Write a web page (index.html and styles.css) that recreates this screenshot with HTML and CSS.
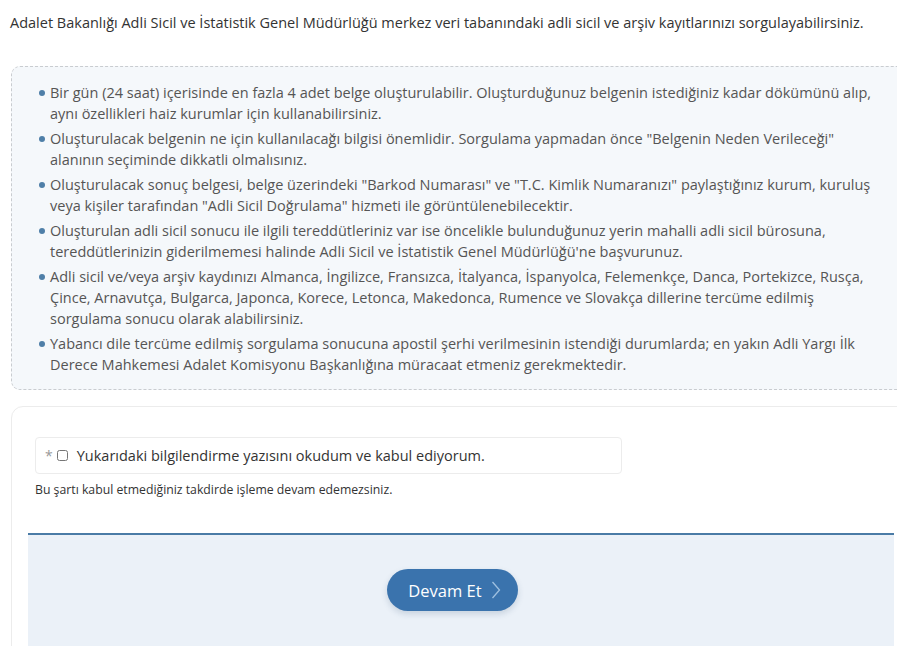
FILE: index.html
```html
<!DOCTYPE html>
<html lang="tr">
<head>
<meta charset="utf-8">
<title>Adli Sicil</title>
<link rel="stylesheet" href="styles.css">
</head>
<body>
<div class="page">
  <p class="intro">Adalet Bakanlığı Adli Sicil ve İstatistik Genel Müdürlüğü merkez veri tabanındaki adli sicil ve arşiv kayıtlarınızı sorgulayabilirsiniz.</p>
  <div class="info">
    <ul class="info-list">
      <li>Bir gün (24 saat) içerisinde en fazla 4 adet belge oluşturulabilir. Oluşturduğunuz belgenin istediğiniz kadar dökümünü alıp, aynı özellikleri haiz kurumlar için kullanabilirsiniz.</li>
      <li>Oluşturulacak belgenin ne için kullanılacağı bilgisi önemlidir. Sorgulama yapmadan önce "Belgenin Neden Verileceği" alanının seçiminde dikkatli olmalısınız.</li>
      <li>Oluşturulacak sonuç belgesi, belge üzerindeki "Barkod Numarası" ve "T.C. Kimlik Numaranızı" paylaştığınız kurum, kuruluş veya kişiler tarafından "Adli Sicil Doğrulama" hizmeti ile görüntülenebilecektir.</li>
      <li>Oluşturulan adli sicil sonucu ile ilgili tereddütleriniz var ise öncelikle bulunduğunuz yerin mahalli adli sicil bürosuna, tereddütlerinizin giderilmemesi halinde Adli Sicil ve İstatistik Genel Müdürlüğü'ne başvurunuz.</li>
      <li>Adli sicil ve/veya arşiv kaydınızı Almanca, İngilizce, Fransızca, İtalyanca, İspanyolca, Felemenkçe, Danca, Portekizce, Rusça, Çince, Arnavutça, Bulgarca, Japonca, Korece, Letonca, Makedonca, Rumence ve Slovakça dillerine tercüme edilmiş sorgulama sonucu olarak alabilirsiniz.</li>
      <li>Yabancı dile tercüme edilmiş sorgulama sonucuna apostil şerhi verilmesinin istendiği durumlarda; en yakın Adli Yargı İlk Derece Mahkemesi Adalet Komisyonu Başkanlığına müracaat etmeniz gerekmektedir.</li>
    </ul>
  </div>
  <div class="card">
    <div class="form-group">
      <label class="check-box">
        <span class="req">*</span>
        <input type="checkbox" class="check">
        <span class="check-text">Yukarıdaki bilgilendirme yazısını okudum ve kabul ediyorum.</span>
      </label>
      <p class="hint">Bu şartı kabul etmediğiniz takdirde işleme devam edemezsiniz.</p>
    </div>
    <div class="actions">
      <button class="btn" type="button">Devam Et
        <svg class="chev" width="10" height="18" viewBox="0 0 10 18"><path d="M1.5 1 L8.5 9 L1.5 17" fill="none" stroke="#9fc0e0" stroke-width="1.3"/></svg>
      </button>
    </div>
  </div>
</div>
</body>
</html>
```
FILE: styles.css
```css
html, body {
  margin: 0;
  padding: 0;
  overflow: hidden;
  background: #fff;
}
body {
  font-family: "Open Sans", "Noto Sans", sans-serif;
  font-size: 14.5px;
  color: #333;
}
.page {
  width: 900px;
  padding: 12px 0 0 11px;
}
.intro {
  margin: 0 0 33px -1px;
  line-height: 21px;
  white-space: nowrap;
}
.info {
  background: #f5f8fb;
  border: 1px dashed #c9ccd0;
  border-radius: 9px;
  padding: 15px 30px 14px 27px;
}
.info-list {
  list-style: none;
  margin: 0;
  padding: 0;
  color: #555;
}
.info-list li {
  position: relative;
  padding-left: 11px;
  line-height: 21px;
  margin-bottom: 4px;
}
.info-list li:last-child {
  margin-bottom: 0;
}
.info-list li::before {
  content: "";
  position: absolute;
  left: 0;
  top: 8px;
  width: 6px;
  height: 6px;
  border-radius: 50%;
  background: #4f7fa8;
}
.card {
  margin-top: 16px;
  border: 1px solid #ececec;
  border-radius: 12px;
  padding: 30px 16px 0 16px;
  background: #fff;
}
.form-group {
  padding-left: 7px;
}
.check-box {
  display: flex;
  align-items: center;
  width: 587px;
  height: 37px;
  box-sizing: border-box;
  border: 1px solid #ececec;
  border-radius: 4px;
  padding-left: 9px;
  color: #333;
}
.req {
  color: #999;
  font-size: 14px;
  margin-right: 4px;
}
.check {
  margin: 0 9px 0 0;
  width: 11px;
  height: 11px;
}
.check-text {
  font-size: 14.5px;
}
.hint {
  margin: 8px 0 0 0;
  font-size: 12.25px;
  line-height: 16px;
  color: #333;
}
.actions {
  margin-top: 35px;
  border-top: 2px solid #4a7ba6;
  background: #ebf1f8;
  height: 140px;
  padding: 34px 0 0 359px;
  box-sizing: border-box;
}
.btn {
  display: flex;
  align-items: center;
  gap: 9px;
  height: 42px;
  width: 131px;
  justify-content: center;
  padding: 0 0 0 4px;
  border: none;
  border-radius: 21px;
  background: #3a73ad;
  color: #fff;
  font-family: "Open Sans", "Noto Sans", sans-serif;
  font-size: 16.5px;
  box-shadow: 0 3px 6px rgba(40, 70, 110, 0.18);
}
.chev {
  display: block;
}
```
